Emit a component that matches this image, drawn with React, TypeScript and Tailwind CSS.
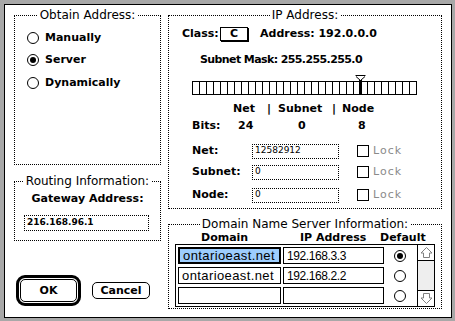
import React from "react";

const bold = "font-['DejaVu_Sans',sans-serif] font-bold text-[11px] leading-[14px]";

function Group({ title, className, children }: { title: string; className: string; children?: React.ReactNode }) {
  return (
    <fieldset className={`border border-dotted border-black ${className}`}>
      <legend className="mx-auto px-[2px] text-[12px] leading-[14px] font-['DejaVu_Sans',sans-serif]">{title}</legend>
      {children}
    </fieldset>
  );
}

function Radio({ on }: { on?: boolean }) {
  return (
    <span className="w-[12px] h-[12px] rounded-full border border-black bg-white flex items-center justify-center shrink-0">
      {on && <span className="w-[6px] h-[6px] rounded-full bg-black" />}
    </span>
  );
}

function Field({ value, className }: { value: string; className: string }) {
  return (
    <div className={`h-[15px] border border-dotted border-black flex items-center pl-[2px] text-[9px] font-['DejaVu_Sans',sans-serif] ${className}`}>
      {value}
    </div>
  );
}

function LockRow({ label, value, className }: { label: string; value: string; className: string }) {
  return (
    <div className={`h-[16px] ml-[23px] flex items-center ${className}`}>
      <span className={`${bold} w-[60px]`}>{label}</span>
      <Field value={value} className="w-[87px]" />
      <span className="ml-[18px] w-[12px] h-[12px] border border-black" />
      <span className="ml-[4px] text-[11px] text-[#8a8a8a] font-['DejaVu_Sans',sans-serif] tracking-[1px]">Lock</span>
    </div>
  );
}

function Slider() {
  const lines = [];
  for (let i = 0; i <= 32; i++) {
    lines.push(<line key={i} x1={i * 7 + 0.5} y1={6} x2={i * 7 + 0.5} y2={19} stroke="#000" />);
  }
  return (
    <svg width="226" height="20" className="ml-[23px] block">
      <rect x="0.5" y="6.5" width="224" height="13" fill="#fff" stroke="#000" />
      {lines}
      <path d="M163.5 0.5 H173.5 M164 1.5 L168.5 5.5 L173 1.5" fill="none" stroke="#000" />
      <rect x="167" y="5" width="3" height="15" fill="#000" />
    </svg>
  );
}

function Arrow({ down }: { down?: boolean }) {
  return (
    <svg width="15" height="15" viewBox="0 0 15 15" className={down ? "rotate-180" : ""}>
      <path d="M7.5 2.5 L13 8 H10.5 V12.5 H4.5 V8 H2 Z" fill="#fff" stroke="#808080" />
    </svg>
  );
}

function DnsRow({ domain, ip, on, first }: { domain: string; ip: string; on?: boolean; first?: boolean }) {
  return (
    <div className="h-[17px] flex items-center ml-[2px]">
      <div
        className={`w-[103px] h-[17px] flex items-center pl-[3px] text-[13px] tracking-[0.4px] font-['Liberation_Sans',sans-serif] ${
          first ? "border-2 border-black bg-[#9dcdfd]" : "border border-black"
        }`}
      >
        {domain}
      </div>
      <div className="ml-[2px] w-[101px] h-[17px] border border-black flex items-center pl-[3px] text-[12px] tracking-[-0.4px] font-['Liberation_Sans',sans-serif]">
        {ip}
      </div>
      <span className="ml-[10px]">
        <Radio on={on} />
      </span>
    </div>
  );
}

export default function App() {
  return (
    <div className="w-[455px] h-[321px] bg-[#a8a8a8] pl-[4px] pt-[4px] pr-[3px] pb-[3px]">
      <div className="w-full h-full border border-black bg-white flex pl-[9px] pt-[3px] text-black font-['DejaVu_Sans',sans-serif]">
        {/* left column */}
        <div className="w-[147px] flex flex-col">
          <Group title="Obtain Address:" className="h-[157px]">
            <div className="mt-[8px] pl-[12px] flex flex-col gap-[6px]">
              <div className="h-[16px] flex items-center gap-[6px]">
                <Radio />
                <span className={bold}>Manually</span>
              </div>
              <div className="h-[16px] flex items-center gap-[6px]">
                <Radio on />
                <span className={bold}>Server</span>
              </div>
              <div className="h-[16px] mt-[1px] flex items-center gap-[6px]">
                <Radio />
                <span className={bold}>Dynamically</span>
              </div>
            </div>
          </Group>

          <Group title="Routing Information:" className="h-[67px] mt-[9px]">
            <div className={`${bold} mt-[4px] text-center`}>Gateway Address:</div>
            <div className="mt-[9px] ml-[9px] w-[125px] h-[16px] border border-dotted border-black flex items-center pl-[2px] font-['DejaVu_Sans',sans-serif] font-bold text-[9px]">
              216.168.96.1
            </div>
          </Group>

          <div className="mt-[34px] flex items-center">
            <div className="ml-[2px] w-[65px] h-[31px] border-[3px] border-black rounded-[9px] p-[1px]">
              <div className={`${bold} w-full h-full border border-black rounded-[5px] flex items-center justify-center`}>OK</div>
            </div>
            <div className={`${bold} ml-[11px] w-[58px] h-[17px] border border-black rounded-[5px] flex items-center justify-center`}>
              Cancel
            </div>
          </div>
        </div>

        {/* right column */}
        <div className="w-[274px] ml-[7px] flex flex-col">
          <Group title="IP Address:" className="h-[201px]">
            <div className="mt-[5px] ml-[13px] h-[14px] flex items-center">
              <span className={`${bold} w-[38px]`}>Class:</span>
              <span className={`${bold} w-[28px] h-[14px] border border-black shadow-[1px_1px_0_#000] flex items-center justify-center`}>C</span>
              <span className={`${bold} ml-[12px]`}>Address: 192.0.0.0</span>
            </div>
            <div className={`${bold} mt-[12px] ml-[31px] h-[14px] tracking-[-0.6px]`}>Subnet Mask: 255.255.255.0</div>
            <div className="mt-[8px]">
              <Slider />
            </div>
            <div className={`${bold} mt-[7px] ml-[64px] h-[14px] flex`}>
              <span className="w-[34px]">Net</span>
              <span className="w-[11px]">|</span>
              <span className="w-[54px]">Subnet</span>
              <span className="w-[10px]">|</span>
              <span>Node</span>
            </div>
            <div className={`${bold} mt-[3px] ml-[23px] h-[14px] flex`}>
              <span className="w-[46px]">Bits:</span>
              <span className="w-[60px]">24</span>
              <span className="w-[60px]">0</span>
              <span>8</span>
            </div>
            <LockRow label="Net:" value="12582912" className="mt-[10px]" />
            <LockRow label="Subnet:" value="0" className="mt-[5px]" />
            <LockRow label="Node:" value="0" className="mt-[7px]" />
          </Group>

          <Group title="Domain Name Server Information:" className="h-[92px] mt-[8px]">
            <div className={`${bold} ml-[32px] h-[12px] leading-[12px] flex`}>
              <span className="w-[99px]">Domain</span>
              <span className="w-[80px]">IP Address</span>
              <span>Default</span>
            </div>
            <div className="mt-[1px] ml-[6px] w-[260px] h-[63px] border border-black flex">
              <div className="flex flex-col gap-[3px] pt-[2px]">
                <DnsRow domain="ontarioeast.net" ip="192.168.3.3" on first />
                <DnsRow domain="ontarioeast.net" ip="192.168.2.2" />
                <DnsRow domain="" ip="" />
              </div>
              <div className="ml-auto w-[17px] h-full border-l border-black bg-[#eeeeee] flex flex-col justify-between">
                <div className="h-[16px] border-b border-black bg-white flex items-center justify-center">
                  <Arrow />
                </div>
                <div className="h-[16px] border-t border-black bg-white flex items-center justify-center">
                  <Arrow down />
                </div>
              </div>
            </div>
          </Group>
        </div>
      </div>
    </div>
  );
}
